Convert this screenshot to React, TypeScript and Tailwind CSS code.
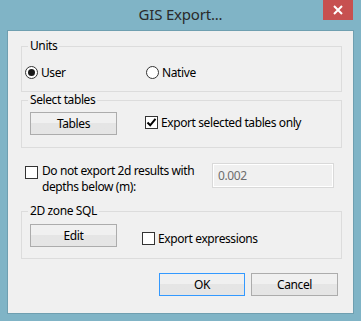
import React from "react";

const font = { fontFamily: '"Noto Sans", "Open Sans", sans-serif' };

function Radio({ checked }: { checked?: boolean }) {
  return (
    <span className="w-[13px] h-[13px] rounded-full border border-[#333333] bg-white flex items-center justify-center shrink-0">
      {checked && <span className="w-[7px] h-[7px] rounded-full bg-[#1a1a1a]" />}
    </span>
  );
}

function Check({ checked }: { checked?: boolean }) {
  return (
    <span className="w-[13px] h-[13px] border border-[#333333] bg-white flex items-center justify-center shrink-0">
      {checked && (
        <svg width="11" height="11" viewBox="0 0 11 11">
          <path d="M1.5 5.5 L4.2 8.3 L9.5 1.8" fill="none" stroke="#000" strokeWidth="2" />
        </svg>
      )}
    </span>
  );
}

function Btn({ label, focus, w = "w-[87px]" }: { label: string; focus?: boolean; w?: string }) {
  return (
    <div
      className={`${w} h-[23px] flex items-center justify-center border ${
        focus ? "border-[#3399ff]" : "border-[#acacac]"
      } bg-gradient-to-b from-[#f0f0f0] from-50% to-[#e5e5e5] to-50% text-black`}
    >
      {label}
    </div>
  );
}

function Group({ title, className, children }: { title: string; className: string; children: React.ReactNode }) {
  return (
    <div className={`relative border border-[#dcdcdc] ${className}`}>
      <span className="absolute -top-[9px] left-[6px] px-[2px] bg-[#f0f0f0] leading-[16px]">{title}</span>
      {children}
    </div>
  );
}

export default function App() {
  return (
    <div
      className="w-[361px] h-[321px] bg-[#80b4c6] flex flex-col text-[12px] tracking-[-0.4px] text-black"
      style={font}
    >
      <div className="relative h-[30px] shrink-0 flex items-center justify-center">
        <span className="text-[15px] tracking-[-0.2px] text-[#2a2a2a] -mt-[1px]">GIS Export...</span>
        <div className="absolute top-0 right-[8px] w-[30px] h-[20px] bg-[#c75050] flex items-center justify-center">
          <svg width="10" height="10" viewBox="0 0 10 10">
            <path d="M1 1 L9 9 M9 1 L1 9" stroke="#fff" strokeWidth="2" />
          </svg>
        </div>
      </div>
      <div className="mx-[7px] mb-[7px] flex-1 border border-[#6f9fb0] bg-[#f0f0f0] flex flex-col pl-[13px] pr-[11px] pt-[15px]">
        <Group title="Units" className="h-[46px] shrink-0">
          <div className="flex items-center h-[13px] mt-[19px] pl-[3px]">
            <div className="flex items-center gap-[3px] w-[121px]">
              <Radio checked />
              <span>User</span>
            </div>
            <div className="flex items-center gap-[3px]">
              <Radio />
              <span>Native</span>
            </div>
          </div>
        </Group>

        <Group title="Select tables" className="h-[48px] mt-[8px] shrink-0">
          <div className="flex items-start mt-[11px] pl-[8px]">
            <Btn label="Tables" />
            <div className="flex items-center gap-[3px] h-[13px] mt-[4px] ml-[28px]">
              <Check checked />
              <span className="whitespace-nowrap">Export selected tables only</span>
            </div>
          </div>
        </Group>

        <div className="flex items-start mt-[15px] pl-[4px] pr-[8px] h-[26px] shrink-0">
          <div className="mt-[3px]">
            <Check />
          </div>
          <div className="ml-[4px] leading-[16px] whitespace-nowrap flex flex-col">
            <span>Do not export 2d results with</span>
            <span>depths below (m):</span>
          </div>
          <div className="ml-auto w-[122px] h-[25px] border border-[#d9d9d9] shadow-[inset_0_0_0_1px_#ffffff] bg-[#f0f0f0] flex items-center pl-[5px] text-[#6d6d6d]">
            0.002
          </div>
        </div>

        <Group title="2D zone SQL" className="h-[48px] mt-[22px] shrink-0">
          <div className="flex items-start mt-[12px] pl-[8px]">
            <Btn label="Edit" />
            <div className="flex items-center gap-[3px] h-[13px] mt-[8px] ml-[25px]">
              <Check />
              <span className="whitespace-nowrap">Export expressions</span>
            </div>
          </div>
        </Group>

        <div className="flex justify-end gap-[6px] mt-[14px] pr-[4px]">
          <Btn label="OK" focus w="w-[86px]" />
          <Btn label="Cancel" w="w-[87px]" />
        </div>
      </div>
    </div>
  );
}
